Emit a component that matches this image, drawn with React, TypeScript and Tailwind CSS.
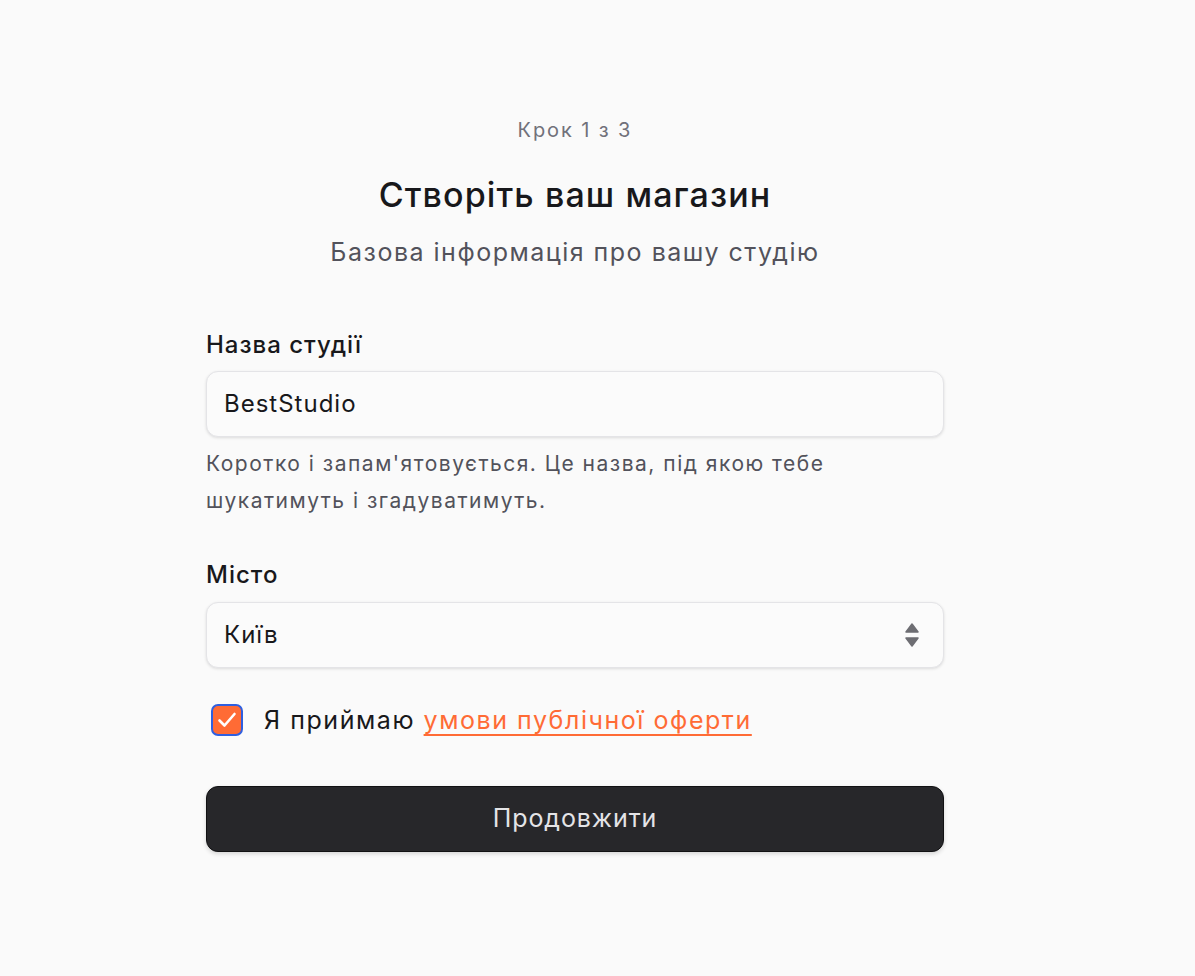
import React from "react";

export default function App() {
  return (
    <div
      className="min-h-[976px] w-full bg-[#fafafa] text-[#18181b]"
      style={{ fontFamily: "Inter, 'Noto Sans', sans-serif" }}
    >
      <div className="ml-[206px] flex w-[738px] flex-col pt-[116px]">
        <div className="text-center text-[20px] leading-[28px] tracking-[1.9px] text-[#71717a]">Крок 1 з 3</div>
        <h1 className="mt-[31px] text-center text-[34px] font-medium leading-[40px] tracking-[1.1px] text-[#18181b]">
          Створіть ваш магазин
        </h1>
        <p className="mt-[21px] text-center text-[25px] leading-[32px] tracking-[1.5px] text-[#52525b]">
          Базова інформація про вашу студію
        </p>

        <label className="mt-[62px] text-[24px] font-medium leading-[30px] tracking-[1px] text-[#18181b]">Назва студії</label>
        <div className="mt-[11px] flex h-[66px] items-center rounded-[12px] border border-[#e4e4e7] bg-[#fbfbfb] px-[17px] shadow-[0_1px_3px_rgba(0,0,0,0.12)]">
          <span className="text-[24px] tracking-[1px] text-[#18181b]">BestStudio</span>
        </div>
        <p className="mt-[8px] text-[21px] leading-[37px] tracking-[1.5px] text-[#52525b]">
          Коротко і запам'ятовується. Це назва, під якою тебе шукатимуть і згадуватимуть.
        </p>

        <label className="mt-[41px] text-[24px] font-medium leading-[30px] tracking-[1px] text-[#18181b]">Місто</label>
        <div className="mt-[12px] flex h-[66px] items-center justify-between rounded-[12px] border border-[#e4e4e7] bg-[#fbfbfb] pl-[17px] pr-[24px] shadow-[0_1px_3px_rgba(0,0,0,0.12)]">
          <span className="text-[24px] tracking-[1px] text-[#18181b]">Київ</span>
          <svg width="14" height="28" viewBox="0 0 14 28">
            <path d="M7 3 L13 11 L1 11 Z" fill="#6e6e73" strokeLinejoin="round" stroke="#6e6e73" strokeWidth="1.5" />
            <path d="M1 17 L13 17 L7 25 Z" fill="#6e6e73" strokeLinejoin="round" stroke="#6e6e73" strokeWidth="1.5" />
          </svg>
        </div>

        <div className="mt-[36px] flex h-[32px] items-center pl-[5px]">
          <div className="flex h-[32px] w-[32px] shrink-0 items-center justify-center rounded-[7px] border-2 border-[#2f5fe0] bg-[#ff6b35]">
            <svg width="24" height="24" viewBox="0 0 24 24" fill="none">
              <path d="M4.5 12.5 L9.5 17.5 L19.5 6" stroke="white" strokeWidth="2.6" strokeLinecap="round" strokeLinejoin="round" />
            </svg>
          </div>
          <span className="ml-[21px] text-[25px] leading-[32px] tracking-[1.55px] text-[#18181b]">
            Я приймаю{" "}
            <a className="text-[#ff6b35] underline decoration-[2px] underline-offset-[5px]">умови публічної оферти</a>
          </span>
        </div>

        <button className="mt-[50px] flex h-[66px] items-center justify-center rounded-[12px] border border-[#111113] bg-[#27272a] text-[25px] tracking-[0.9px] text-[#e4e4e7] shadow-[0_2px_4px_rgba(0,0,0,0.15)]">
          Продовжити
        </button>
      </div>
    </div>
  );
}
